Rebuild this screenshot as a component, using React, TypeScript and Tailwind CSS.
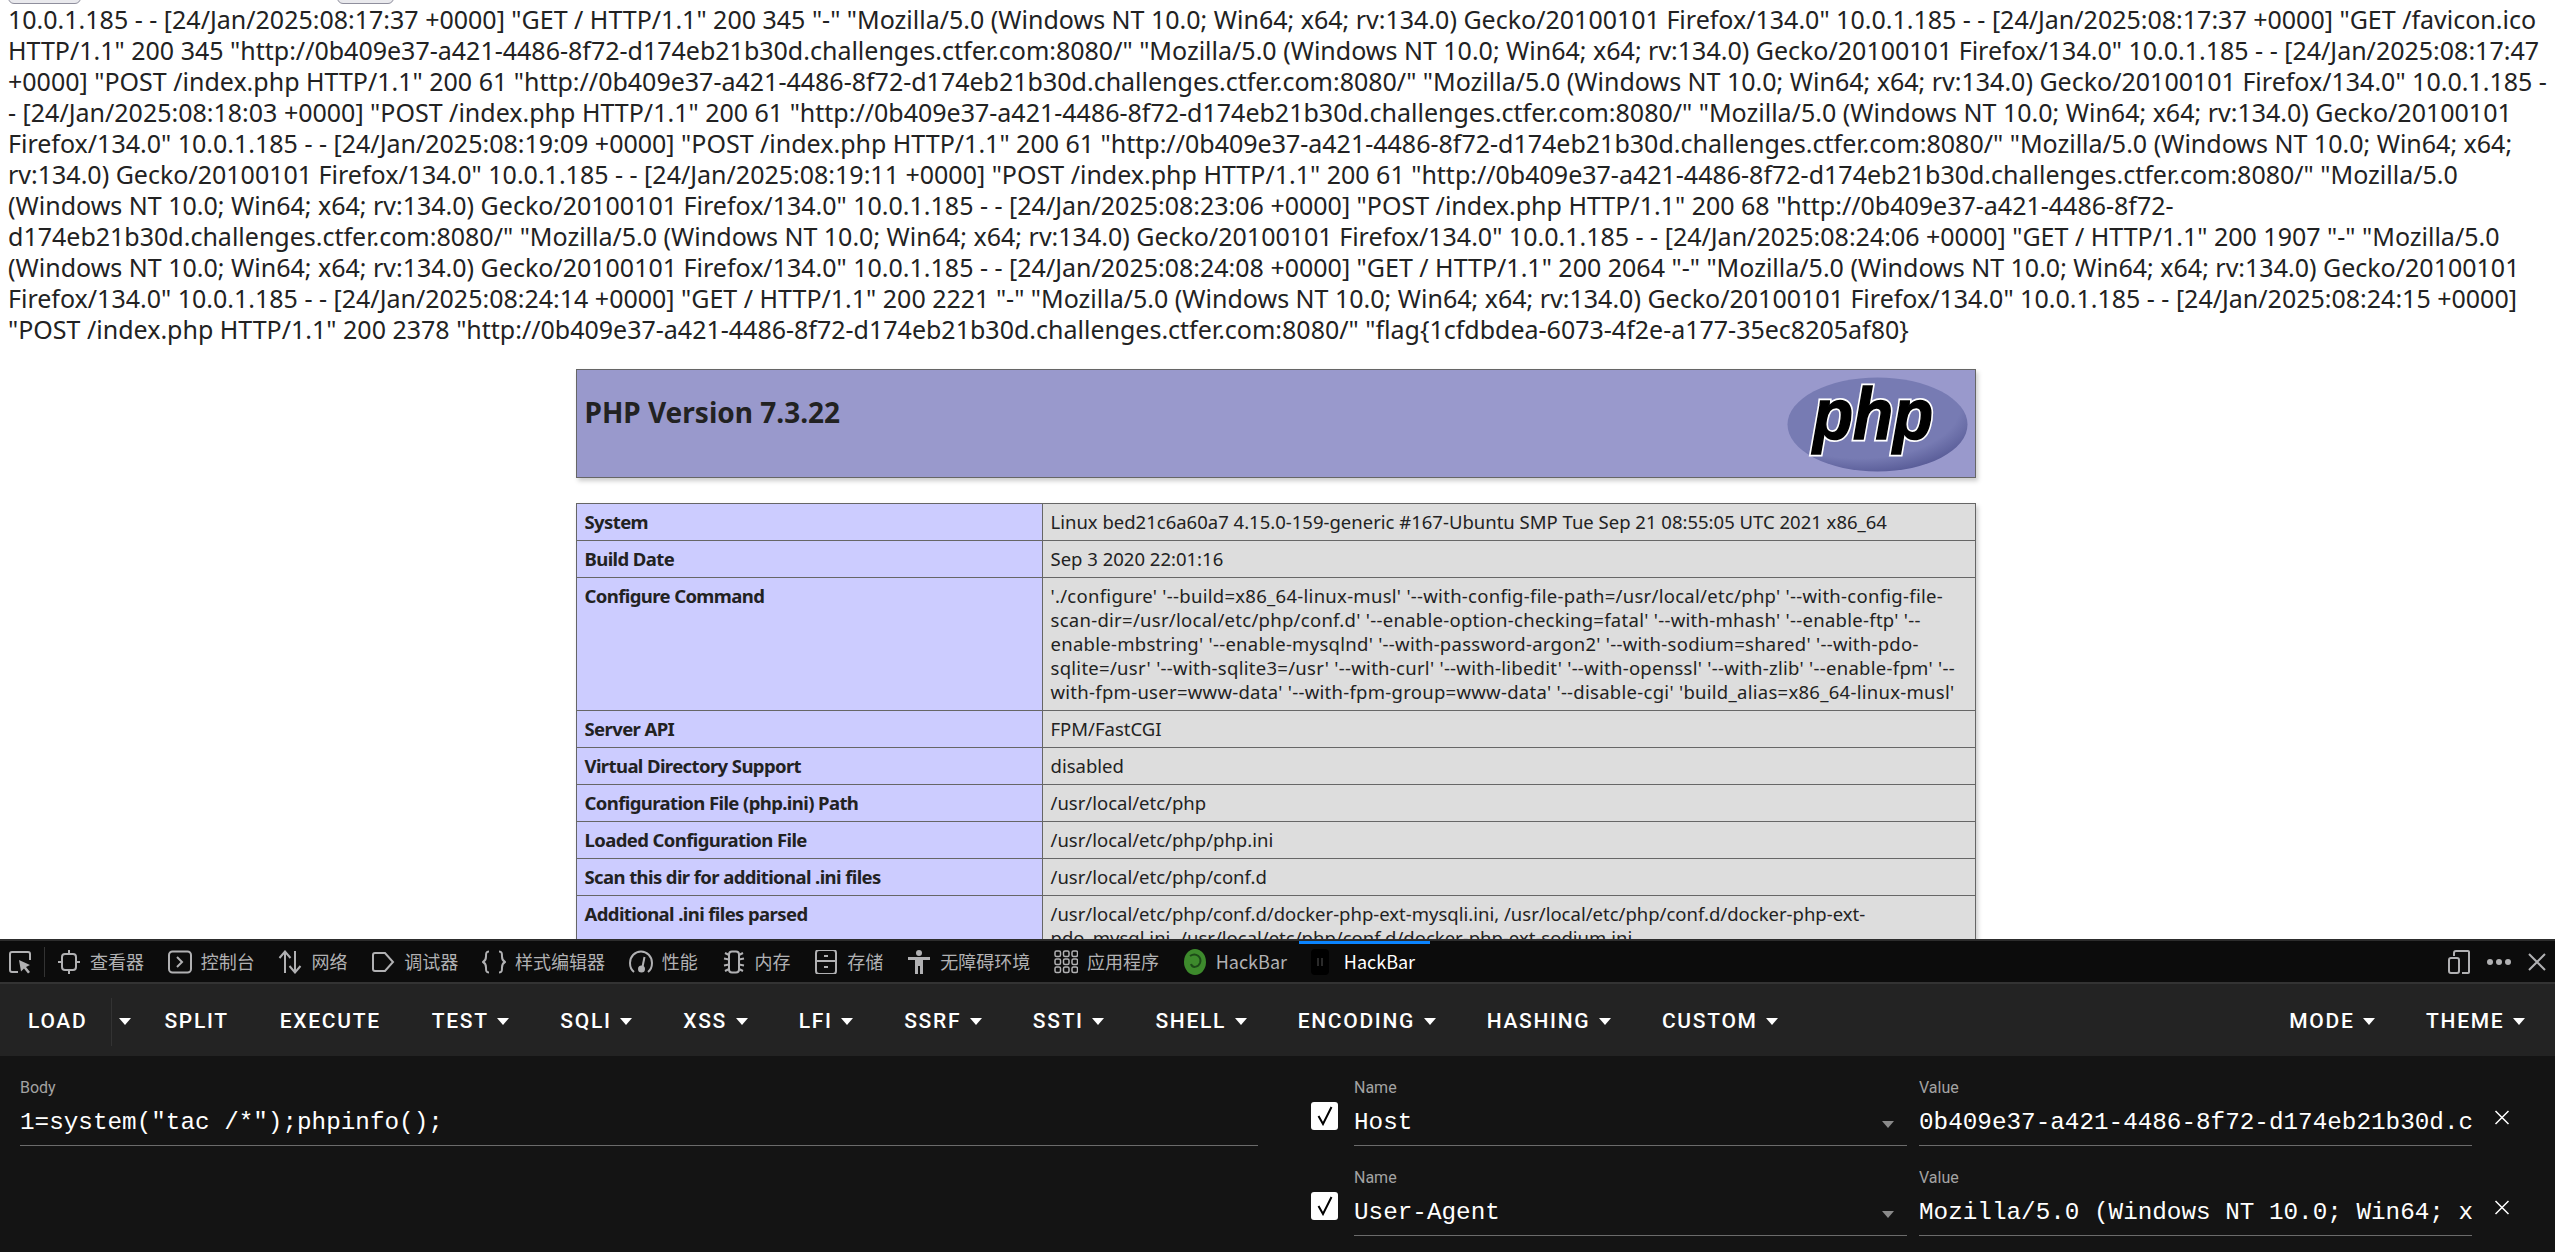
import React from "react";

const host = "http://0b409e37-a421-4486-8f72-d174eb21b30d.challenges.ctfer.com:8080/";
const ua = "Mozilla/5.0 (Windows NT 10.0; Win64; x64; rv:134.0) Gecko/20100101";

const logLines = [
  `10.0.1.185 - - [24/Jan/2025:08:17:37 +0000] "GET / HTTP/1.1" 200 345 "-" "${ua} Firefox/134.0" 10.0.1.185 - - [24/Jan/2025:08:17:37 +0000] "GET /favicon.ico`,
  `HTTP/1.1" 200 345 "${host}" "${ua} Firefox/134.0" 10.0.1.185 - - [24/Jan/2025:08:17:47`,
  `+0000] "POST /index.php HTTP/1.1" 200 61 "${host}" "${ua} Firefox/134.0" 10.0.1.185 -`,
  `- [24/Jan/2025:08:18:03 +0000] "POST /index.php HTTP/1.1" 200 61 "${host}" "${ua}`,
  `Firefox/134.0" 10.0.1.185 - - [24/Jan/2025:08:19:09 +0000] "POST /index.php HTTP/1.1" 200 61 "${host}" "Mozilla/5.0 (Windows NT 10.0; Win64; x64;`,
  `rv:134.0) Gecko/20100101 Firefox/134.0" 10.0.1.185 - - [24/Jan/2025:08:19:11 +0000] "POST /index.php HTTP/1.1" 200 61 "${host}" "Mozilla/5.0`,
  `(Windows NT 10.0; Win64; x64; rv:134.0) Gecko/20100101 Firefox/134.0" 10.0.1.185 - - [24/Jan/2025:08:23:06 +0000] "POST /index.php HTTP/1.1" 200 68 "http://0b409e37-a421-4486-8f72-`,
  `d174eb21b30d.challenges.ctfer.com:8080/" "${ua} Firefox/134.0" 10.0.1.185 - - [24/Jan/2025:08:24:06 +0000] "GET / HTTP/1.1" 200 1907 "-" "Mozilla/5.0`,
  `(Windows NT 10.0; Win64; x64; rv:134.0) Gecko/20100101 Firefox/134.0" 10.0.1.185 - - [24/Jan/2025:08:24:08 +0000] "GET / HTTP/1.1" 200 2064 "-" "${ua}`,
  `Firefox/134.0" 10.0.1.185 - - [24/Jan/2025:08:24:14 +0000] "GET / HTTP/1.1" 200 2221 "-" "${ua} Firefox/134.0" 10.0.1.185 - - [24/Jan/2025:08:24:15 +0000]`,
  `"POST /index.php HTTP/1.1" 200 2378 "${host}" "flag{1cfdbdea-6073-4f2e-a177-35ec8205af80}`,
];

const rows: { label: string; value: string[]; wide?: boolean }[] = [
  { label: "System", value: ["Linux bed21c6a60a7 4.15.0-159-generic #167-Ubuntu SMP Tue Sep 21 08:55:05 UTC 2021 x86_64"] },
  { label: "Build Date", value: ["Sep 3 2020 22:01:16"] },
  {
    label: "Configure Command",
    wide: true,
    value: [
      "'./configure' '--build=x86_64-linux-musl' '--with-config-file-path=/usr/local/etc/php' '--with-config-file-",
      "scan-dir=/usr/local/etc/php/conf.d' '--enable-option-checking=fatal' '--with-mhash' '--enable-ftp' '--",
      "enable-mbstring' '--enable-mysqlnd' '--with-password-argon2' '--with-sodium=shared' '--with-pdo-",
      "sqlite=/usr' '--with-sqlite3=/usr' '--with-curl' '--with-libedit' '--with-openssl' '--with-zlib' '--enable-fpm' '--",
      "with-fpm-user=www-data' '--with-fpm-group=www-data' '--disable-cgi' 'build_alias=x86_64-linux-musl'",
    ],
  },
  { label: "Server API", value: ["FPM/FastCGI"] },
  { label: "Virtual Directory Support", value: ["disabled"] },
  { label: "Configuration File (php.ini) Path", value: ["/usr/local/etc/php"] },
  { label: "Loaded Configuration File", value: ["/usr/local/etc/php/php.ini"] },
  { label: "Scan this dir for additional .ini files", value: ["/usr/local/etc/php/conf.d"] },
  {
    label: "Additional .ini files parsed",
    value: [
      "/usr/local/etc/php/conf.d/docker-php-ext-mysqli.ini, /usr/local/etc/php/conf.d/docker-php-ext-",
      "pdo_mysql.ini, /usr/local/etc/php/conf.d/docker-php-ext-sodium.ini",
    ],
  },
];

const S = "fill-none stroke-[#b1b1b3] stroke-2";

function PickIcon() {
  return (
    <svg width="24" height="24" viewBox="0 0 24 24" className={S}>
      <path d="M10 22H4a2 2 0 0 1-2-2V4a2 2 0 0 1 2-2h16a2 2 0 0 1 2 2v6" />
      <path d="M11 10l11 5-4 2 4 5-2 1.500-4-5-3 3z" className="fill-[#b1b1b3] stroke-0" />
    </svg>
  );
}

const icons: Record<string, React.ReactNode> = {
  inspector: (
    <svg width="24" height="24" viewBox="0 0 24 24" className={S}>
      <rect x="5" y="4" width="14" height="16" rx="3" />
      <path d="M12 0v4M12 20v4M1 12h4M19 12h4" />
    </svg>
  ),
  console: (
    <svg width="24" height="24" viewBox="0 0 24 24" className={S}>
      <rect x="1" y="1.500" width="22" height="21" rx="3.500" />
      <path d="M9 7l5 5-5 5" />
    </svg>
  ),
  network: (
    <svg width="24" height="24" viewBox="0 0 24 24" className={S}>
      <path d="M7 23V2M1.500 8L7 1.500 12.500 8M17 1v21M11.500 16l5.500 6.500 5.500-6.500" />
    </svg>
  ),
  debugger: (
    <svg width="24" height="24" viewBox="0 0 24 24" className={S}>
      <path d="M4 3h10l8 9-8 9H4a2 2 0 0 1-2-2V5a2 2 0 0 1 2-2z" />
    </svg>
  ),
  style: (
    <svg width="24" height="24" viewBox="0 0 24 24" className={S}>
      <path d="M7 1.500c-3 0-3 2-3 5 0 3-1 4.500-3 5.500 2 1 3 2.500 3 5.500s0 5 3 5M17 1.500c3 0 3 2 3 5 0 3 1 4.500 3 5.500-2 1-3 2.500-3 5.500s0 5-3 5" />
    </svg>
  ),
  perf: (
    <svg width="24" height="24" viewBox="0 0 24 24" className={S}>
      <path d="M5 22C2.500 20 1 17 1 13 1 6.500 6 1.500 12 1.500S23 6.500 23 13c0 4-1.500 7-4 9" />
      <path d="M15.500 7l-2 10" />
      <circle cx="12.500" cy="19" r="2.500" className="fill-[#b1b1b3]" />
    </svg>
  ),
  memory: (
    <svg width="24" height="24" viewBox="0 0 24 24" className={S}>
      <rect x="7" y="1.500" width="10" height="21" rx="3" />
      <path d="M7 5L3 3M7 9.500L2 8.500M7 14.500l-5 1M7 19l-4 2M17 5l4-2M17 9.500l5-1M17 14.500l5 1M17 19l4 2" />
    </svg>
  ),
  storage: (
    <svg width="24" height="24" viewBox="0 0 24 24" className={S}>
      <rect x="2" y="0" width="20" height="24" rx="3" />
      <path d="M2 11h20M10 6h4M10 17h4" />
    </svg>
  ),
  a11y: (
    <svg width="24" height="24" viewBox="0 0 24 24" className="fill-[#b1b1b3]">
      <circle cx="12" cy="3" r="3" />
      <path d="M1 7h22v3h-7v14h-3v-8h-2v8H8V10H1z" />
    </svg>
  ),
  apps: (
    <svg width="24" height="24" viewBox="0 0 24 24" className="fill-none stroke-[#b1b1b3] stroke-[1.5]">
      {[1, 9.5, 18].map((x) =>
        [1, 9, 17].map((y) => <rect key={`${x}-${y}`} x={x} y={y} width="5.500" height="5.500" rx="1.500" />)
      )}
    </svg>
  ),
  hackbar1: (
    <svg width="24" height="28" viewBox="0 0 24 28">
      <ellipse cx="12" cy="14" rx="11" ry="13" className="fill-[#3d8a2c]" />
      <path d="M7 8c6-4 12 1 10 7-2 5-8 5-9 1" className="fill-none stroke-[#1c4a18] stroke-2" />
    </svg>
  ),
  hackbar2: (
    <svg width="24" height="28" viewBox="0 0 24 28">
      <rect x="0" y="1" width="18" height="26" rx="4" className="fill-black" />
      <path d="M7 10v8M11 10v8" className="fill-none stroke-[#2a2a2a] stroke-2" />
    </svg>
  ),
};

const tabs = [
  { icon: "inspector", label: "查看器" },
  { icon: "console", label: "控制台" },
  { icon: "network", label: "网络" },
  { icon: "debugger", label: "调试器" },
  { icon: "style", label: "样式编辑器" },
  { icon: "perf", label: "性能" },
  { icon: "memory", label: "内存" },
  { icon: "storage", label: "存储" },
  { icon: "a11y", label: "无障碍环境" },
  { icon: "apps", label: "应用程序" },
  { icon: "hackbar1", label: "HackBar" },
  { icon: "hackbar2", label: "HackBar", active: true },
];

function Arrow({ className = "" }: { className?: string }) {
  return (
    <svg width="12" height="7" viewBox="0 0 12 7" className={className}>
      <path d="M0 0h12L6 7z" fill="currentColor" />
    </svg>
  );
}

function BarButton({ label, arrow = true }: { label: string; arrow?: boolean }) {
  return (
    <div className="flex items-center gap-[8.6px] px-6 mr-[3px] text-[21px] font-medium tracking-[1.7px] text-white whitespace-nowrap">
      <span>{label}</span>
      {arrow && <Arrow />}
    </div>
  );
}

function Field({ label, value, select, width }: { label: string; value: string; select?: boolean; width: string }) {
  return (
    <div className={`flex flex-col border-b border-[#6b6b6b] overflow-hidden ${width}`}>
      <div className="font-['Roboto'] text-[16px] leading-[20px] text-[#a3a3a3]">{label}</div>
      <div className="relative pt-[3px] font-['Liberation_Mono'] text-[24.3px] leading-[44px] text-white whitespace-nowrap overflow-hidden">
        {value}
        {select && <Arrow className="absolute right-[13px] top-[23px] text-[#8a8a8a]" />}
      </div>
    </div>
  );
}

function HeaderRow({ name, value }: { name: string; value: string }) {
  return (
    <div className="flex items-center">
      <div className="w-[27px] h-[28px] mt-2 bg-white rounded-[3px] flex items-center justify-center mr-4">
        <svg width="18" height="20" viewBox="0 0 18 20" className="fill-none stroke-black stroke-2">
          <path d="M2.500 10l4.500 8L15.500 1" />
        </svg>
      </div>
      <Field label="Name" value={name} select width="w-[553px]" />
      <div className="w-3" />
      <Field label="Value" value={value} width="w-[553px]" />
      <svg width="16" height="15" viewBox="0 0 16 15" className="ml-[22px] mt-[10px] fill-none stroke-white stroke-[1.5]">
        <path d="M1.500 1l13 13M14.500 1l-13 13" />
      </svg>
    </div>
  );
}

export default function App() {
  return (
    <div className="flex flex-col h-[1252px] overflow-hidden bg-white">
      <div className="h-[939px] shrink-0 overflow-hidden font-['Noto_Sans','Noto_Sans_CJK_SC',sans-serif] text-[#222]">
        {/* page buttons scrolled off the top */}
        <div className="flex h-[4px] items-end overflow-hidden">
          <div className="ml-2 w-[73px] h-6 rounded-b-md border border-[#8f8f9d] bg-[#e9e9ed]" />
          <div className="ml-[256px] w-[57px] h-6 rounded-b-md border border-[#8f8f9d] bg-[#e9e9ed]" />
        </div>

        <div className="pl-2 mb-[24px] text-[25px] leading-[31px] whitespace-nowrap">
          {logLines.map((line, i) => (
            <div key={i}>{line}</div>
          ))}
        </div>

        {/* phpinfo */}
        <div className="w-[1400px] ml-[576px] h-[109px] flex justify-between border border-[#666] bg-[#9999cc] shadow-[1.5px_3px_4.5px_#ccc]">
          <h1 className="pl-[7.5px] pt-[24px] text-[28px] leading-[36px] font-bold">PHP Version 7.3.22</h1>
          <svg width="181" height="95" viewBox="0 0 181 95" className="mt-[7px] mr-[7px] overflow-visible">
            <defs>
              <radialGradient id="phpFill" cx="0.4" cy="0.3" r="0.8">
                <stop offset="0.7" stopColor="#777bb3" />
                <stop offset="1" stopColor="#4c4f8c" />
              </radialGradient>
            </defs>
            <ellipse cx="90.500" cy="47.500" rx="90" ry="47" fill="url(#phpFill)" />
            <text
              x="26"
              y="62"
              textLength="120"
              lengthAdjust="spacingAndGlyphs"
              className="font-['Liberation_Sans'] italic font-bold text-[72px] fill-white stroke-white stroke-[5]"
            >
              php
            </text>
            <text
              x="26"
              y="62"
              textLength="120"
              lengthAdjust="spacingAndGlyphs"
              className="font-['Liberation_Sans'] italic font-bold text-[72px] fill-black stroke-black stroke-[1.5]"
            >
              php
            </text>
          </svg>
        </div>

        <table className="mt-[25px] ml-[576px] w-[1400px] table-fixed border-collapse shadow-[1.5px_3px_4.5px_#ccc] text-[18.5px] leading-[24px]">
          <tbody>
            {rows.map((row) => (
              <tr key={row.label}>
                <td className="w-[466px] border border-[#666] bg-[#ccccff] px-[7.5px] py-[6px] align-top font-bold tracking-[-0.6px] whitespace-nowrap">
                  {row.label}
                </td>
                <td className={`border border-[#666] bg-[#dddddd] px-[7.5px] py-[6px] align-top whitespace-nowrap ${row.wide ? "tracking-[0.28px]" : ""}`}>
                  {row.value.map((v) => (
                    <div key={v}>{v}</div>
                  ))}
                </td>
              </tr>
            ))}
          </tbody>
        </table>
      </div>

      {/* devtools */}
      <div className="flex-1 flex flex-col bg-[#141414] font-['Roboto',sans-serif]">
        <div className="h-[45px] shrink-0 flex items-center border-t-2 border-b-2 border-t-[#2d2d2d] border-b-[#333] bg-[#0c0c0c] font-['Noto_Sans_CJK_SC',sans-serif] text-[18px] text-[#b1b1b3]">
          <div className="pl-2 pr-3 border-r border-[#333] h-[30px] flex items-center">
            <PickIcon />
          </div>
          <div className="flex items-center h-full">
            {tabs.map((t) => (
              <div key={t.icon} className={`relative flex items-center gap-[9px] px-[11.9px] h-full ${t.active ? "text-white" : ""}`}>
                {t.active && <div className="absolute left-0 right-[-3px] top-0 h-[3px] bg-[#0a84ff]" />}
                {icons[t.icon]}
                <span className="whitespace-nowrap">{t.label}</span>
              </div>
            ))}
          </div>
          <div className="ml-auto flex items-center gap-[17px] pr-[9px]">
            <svg width="22" height="24" viewBox="0 0 22 24" className={S}>
              <path d="M6 6V3a2 2 0 0 1 2-2h12a1 1 0 0 1 1 1v20a1 1 0 0 1-1 1h-6" />
              <rect x="1" y="8" width="10" height="15" rx="2" />
            </svg>
            <svg width="24" height="6" viewBox="0 0 24 6" className="fill-[#b1b1b3]">
              <circle cx="3" cy="3" r="3" />
              <circle cx="12" cy="3" r="3" />
              <circle cx="21" cy="3" r="3" />
            </svg>
            <svg width="18" height="18" viewBox="0 0 18 18" className={S}>
              <path d="M1 1l16 16M17 1L1 17" />
            </svg>
          </div>
        </div>

        <div className="h-[72px] shrink-0 flex items-center bg-[#232323] pl-[4px] pr-[3px] pt-[3px]">
          <div className="flex items-center h-[48px] mr-[9px]">
            <div className="px-6 border-r border-[#333] h-full flex items-center text-[21px] font-medium tracking-[1.7px] text-white">LOAD</div>
            <Arrow className="ml-[7px] text-white" />
          </div>
          <BarButton label="SPLIT" arrow={false} />
          <BarButton label="EXECUTE" arrow={false} />
          <BarButton label="TEST" />
          <BarButton label="SQLI" />
          <BarButton label="XSS" />
          <BarButton label="LFI" />
          <BarButton label="SSRF" />
          <BarButton label="SSTI" />
          <BarButton label="SHELL" />
          <BarButton label="ENCODING" />
          <BarButton label="HASHING" />
          <BarButton label="CUSTOM" />
          <div className="ml-auto flex">
            <BarButton label="MODE" />
            <BarButton label="THEME" />
          </div>
        </div>

        <div className="flex flex-1 pt-[22px]">
          <div className="pl-5 w-[1311px]">
            <Field label="Body" value={'1=system("tac /*");phpinfo();'} width="w-[1238px]" />
          </div>
          <div className="flex flex-col gap-[22px]">
            <HeaderRow name="Host" value="0b409e37-a421-4486-8f72-d174eb21b30d.c" />
            <HeaderRow name="User-Agent" value="Mozilla/5.0 (Windows NT 10.0; Win64; x" />
          </div>
        </div>
      </div>
    </div>
  );
}
